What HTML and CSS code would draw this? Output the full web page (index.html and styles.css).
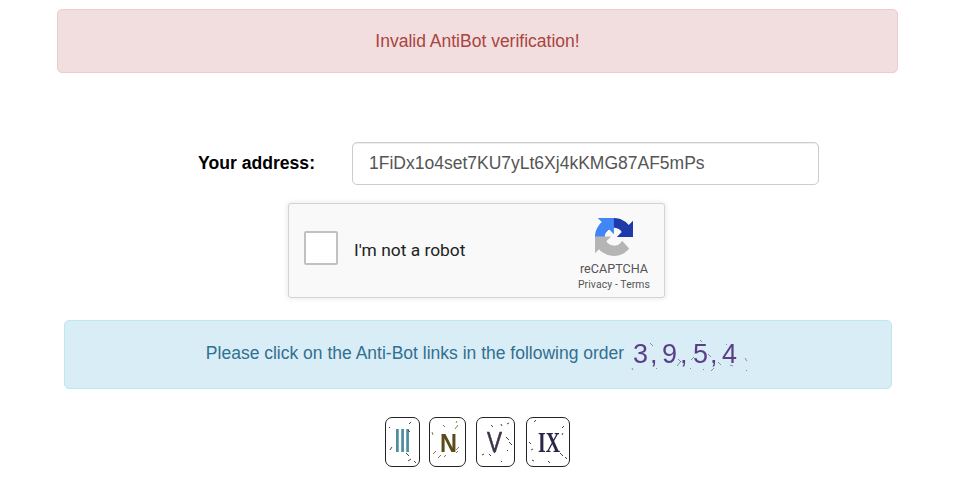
FILE: index.html
```html
<!DOCTYPE html>
<html lang="en">
<head>
  <meta charset="UTF-8">
  <title>Faucet</title>
  <link rel="stylesheet" href="styles.css">
</head>
<body>
  <main class="container">
    <div class="alert alert-danger">Invalid AntiBot verification!</div>

    <form class="claim">
      <div class="address-row">
        <label for="address">Your address:</label>
        <input type="text" id="address" value="1FiDx1o4set7KU7yLt6Xj4kKMG87AF5mPs">
      </div>

      <div class="recaptcha">
        <span class="recaptcha-check"></span>
        <span class="recaptcha-label">I'm not a robot</span>
        <div class="recaptcha-brand">
          <svg class="recaptcha-logo" viewBox="0 0 64 64">
            <path d="M64 31.955l-.033-1.37V4.687l-7.16 7.16C50.948 4.674 42.033.093 32.05.093c-10.4 0-19.622 4.96-25.458 12.64l11.736 11.86a15.55 15.55 0 0 1 4.754-5.334c2.05-1.6 4.952-2.906 8.968-2.906.485 0 .86.057 1.135.163 4.976.393 9.29 3.14 11.83 7.125l-8.307 8.307 32.29.006" fill="#1c3aa9"/>
            <path d="M31.862.094l-1.37.033H4.594l7.16 7.16C4.58 13.147 0 22.06 0 32.046c0 10.4 4.96 19.622 12.64 25.458L24.5 45.768a15.55 15.55 0 0 1-5.334-4.754c-1.6-2.05-2.906-4.952-2.906-8.968 0-.485.057-.86.163-1.135.393-4.976 3.14-9.29 7.125-11.83l8.307 8.307L31.862.094" fill="#4285f4"/>
            <path d="M.001 32.045l.033 1.37v25.898l7.16-7.16c5.86 7.173 14.774 11.754 24.76 11.754 10.4 0 19.622-4.96 25.458-12.64L45.677 38.4a15.55 15.55 0 0 1-4.754 5.334c-2.05 1.6-4.952 2.906-8.968 2.906-.485 0-.86-.057-1.135-.163-4.976-.393-9.29-3.14-11.83-7.125l8.307-8.307-32.29.006" fill="#b5b5b5"/>
          </svg>
          <span class="recaptcha-name">reCAPTCHA</span>
          <span class="recaptcha-links">Privacy - Terms</span>
        </div>
      </div>

      <div class="alert alert-info">
        <span>Please click on the Anti-Bot links in the following order</span>
        <svg class="order-img" viewBox="0 0 124 44" width="124" height="44">
          <text class="order-text" y="30.5" x="7 24 30 36 54 60 67 84 90 96">3, 9, 5, 4</text>
          <path class="order-noise" d="M6 36l1 2M24 11l3 3M46 14l2 3M55 29l-4 5M52 27l3 3M64 36l1 1M74 8l2 2M68 25l-3 3M82 22l3 3M77 37l1 1M88 36l-3 3M92 30l3 3M100 12l1 1M119 26l2 3M120 38l1 1M30 36l1 1M104 33l3 1"/>
        </svg>
      </div>

      <div class="antibot-links">
        <a class="antibot antibot-1">
          <svg viewBox="0 0 35 50" width="35" height="50">
            <text class="ab-text ab-teal" transform="translate(17.5 35) scale(0.55 1)">III</text>
            <path class="ab-noise" d="M4 10l1 1M26 5l-2 2M23 13l2 2M7 30l-2 3M21 36l3 3M23 44l3-2M29 44l2 2"/>
          </svg>
        </a>
        <a class="antibot antibot-2">
          <svg viewBox="0 0 37 50" width="37" height="50">
            <text class="ab-text ab-olive" x="19.5" y="35" textLength="17" lengthAdjust="spacingAndGlyphs">N</text>
            <path class="ab-noise ab-noise-tan" d="M26 12l3-4M14 8l2 2M3 15l1 3M27 6l1-2M30 30l-3 3M4 37l3-3M9 41l3-3M15 40l2-2M27 36l2-2"/>
          </svg>
        </a>
        <a class="antibot antibot-3">
          <svg viewBox="0 0 39 50" width="39" height="50">
            <text class="ab-text ab-dark" x="18.5" y="35" textLength="15" lengthAdjust="spacingAndGlyphs">V</text>
            <path class="ab-noise" d="M15 8l2 2M25 7l1 2M31 7l2-1M30 20l3 3M33 25l3 3M6 38l2-1M13 37l2 2M18 36l2-2M25 44l1 1M31 33l1 1"/>
          </svg>
        </a>
        <a class="antibot antibot-4">
          <svg viewBox="0 0 44 50" width="44" height="50">
            <text class="ab-text ab-navy" x="23" y="35" textLength="22" lengthAdjust="spacingAndGlyphs">IX</text>
            <path class="ab-noise" d="M10 3l-2 2M38 9l-2 2M37 16l-1 2M3 25l2 2M5 33l2-1M34 36l3 3M39 40l2 2M6 43l2 1M22 44l2 2"/>
          </svg>
        </a>
      </div>
    </form>
  </main>
</body>
</html>
```

FILE: styles.css
```css
* {
  box-sizing: border-box;
}
body {
  margin: 0;
  background: #fff;
  font-family: "Liberation Sans", Arial, sans-serif;
}
.container {
  width: 841px;
  margin-left: 57px;
  padding-top: 9px;
}
.alert {
  border: 1px solid transparent;
  border-radius: 5px;
  font-size: 17.5px;
  text-align: center;
}
.alert-danger {
  height: 64px;
  line-height: 62px;
  background: #f2dede;
  border-color: #ebccd1;
  color: #a94442;
}
.claim {
  padding-top: 69px;
}
.address-row {
  display: flex;
  align-items: center;
  padding-left: 141px;
}
.address-row label {
  width: 154px;
  font-size: 17.6px;
  font-weight: bold;
  color: #000;
}
.address-row input {
  width: 467px;
  height: 43px;
  padding: 0 16px;
  border: 1px solid #ccc;
  border-radius: 5px;
  font-family: inherit;
  font-size: 17.5px;
  color: #555;
  box-shadow: inset 0 1px 1px rgba(0,0,0,0.075);
}

/* recaptcha widget */
.recaptcha {
  display: flex;
  align-items: center;
  width: 377px;
  height: 95px;
  margin: 18px 0 22px 231px;
  padding: 0 14px 0 15px;
  background: #f9f9f9;
  border: 1px solid #d3d3d3;
  border-radius: 3px;
  box-shadow: 0 0 4px 1px rgba(0,0,0,0.08);
}
.recaptcha-check {
  width: 34px;
  height: 34px;
  margin-bottom: 6px;
  background: #fff;
  border: 2px solid #c1c1c1;
  border-radius: 2px;
}
.recaptcha-label {
  flex: 1;
  margin: 0 0 2px 16px;
  font-family: Roboto, sans-serif;
  font-size: 17.4px;
  color: #222;
}
.recaptcha-brand {
  display: flex;
  flex-direction: column;
  align-items: center;
  width: 72px;
  padding-top: 9px;
  color: #555;
}
.recaptcha-logo {
  width: 38px;
  height: 38px;
  margin-bottom: 5px;
}
.recaptcha-name {
  font-family: Roboto, sans-serif;
  font-size: 12.6px;
  line-height: 16px;
}
.recaptcha-links {
  font-family: Roboto, sans-serif;
  font-size: 10.4px;
  line-height: 16px;
  letter-spacing: 0.1px;
  white-space: nowrap;
}

.alert-info {
  display: flex;
  align-items: center;
  justify-content: center;
  width: 828px;
  height: 69px;
  margin-left: 7px;
  padding-bottom: 2px;
  background: #d9edf7;
  border-color: #bce8f1;
  color: #31708f;
}
.order-img {
  margin-left: 2px;
  filter: blur(0.6px);
}
.order-text {
  font-family: "Liberation Sans", sans-serif;
  font-size: 27px;
  fill: #5b3f86;
}
.order-noise {
  fill: none;
  stroke: #5b3f86;
  stroke-width: 1;
  opacity: 0.6;
}

/* anti-bot links */
.antibot-links {
  display: flex;
  padding: 28px 0 0 328px;
}
.antibot {
  display: block;
  height: 50px;
  margin-right: 10px;
  border: 1px solid #222;
  border-radius: 7px;
  background: #fff;
}
.antibot-1 {
  margin-right: 9px;
}
.antibot-3 {
  margin-right: 11px;
}
.antibot svg {
  display: block;
  margin: -1px;
  filter: blur(0.5px);
}
.ab-text {
  font-family: "Liberation Sans", sans-serif;
  font-weight: bold;
  text-anchor: middle;
}
.ab-teal {
  font-size: 34px;
  fill: #4f8d9c;
}
.ab-olive {
  font-size: 26px;
  fill: #5a4a1c;
}
.ab-dark {
  font-size: 30px;
  font-weight: normal;
  fill: #3d3447;
  stroke: #3d3447;
  stroke-width: 0.6;
}
.ab-navy {
  font-family: "Liberation Serif", serif;
  font-size: 30px;
  fill: #2d2549;
}
.ab-noise {
  fill: none;
  stroke: #444;
  stroke-width: 1;
}
.ab-noise-tan {
  stroke: #8a7a50;
}
```
